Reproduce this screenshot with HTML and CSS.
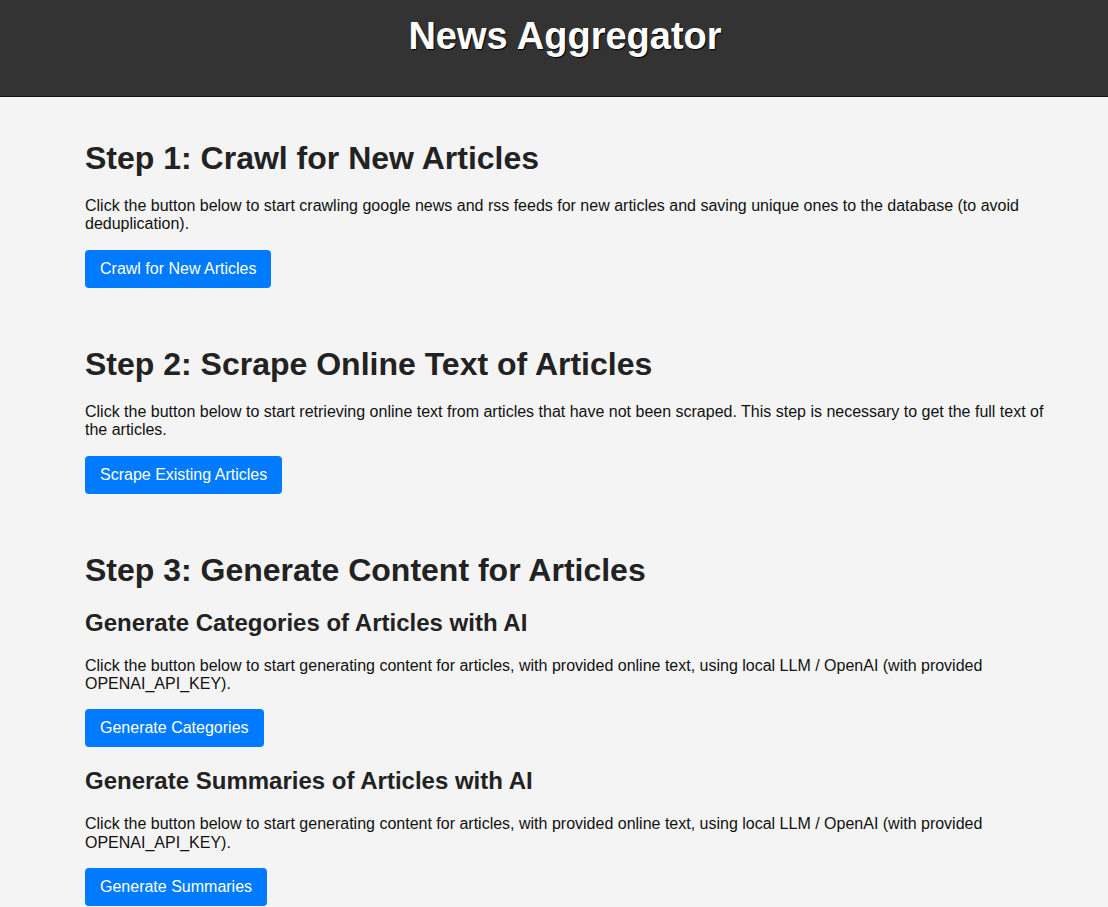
FILE: index.html
```html
<!DOCTYPE html>
<html lang="en">
<head>
<meta charset="utf-8">
<title>News Aggregator</title>
<link rel="stylesheet" href="styles.css">
</head>
<body>
<header class="site-header">
  <h1 class="site-title">News Aggregator</h1>
</header>
<main class="content">
  <section class="step">
    <h2 class="step-title">Step 1: Crawl for New Articles</h2>
    <p class="step-text">Click the button below to start crawling google news and rss feeds for new articles and saving unique ones to the database (to avoid deduplication).</p>
    <div class="actions"><button class="btn">Crawl for New Articles</button></div>
  </section>
  <section class="step">
    <h2 class="step-title">Step 2: Scrape Online Text of Articles</h2>
    <p class="step-text">Click the button below to start retrieving online text from articles that have not been scraped. This step is necessary to get the full text of the articles.</p>
    <div class="actions"><button class="btn">Scrape Existing Articles</button></div>
  </section>
  <section class="step">
    <h2 class="step-title">Step 3: Generate Content for Articles</h2>
    <h3 class="sub-title">Generate Categories of Articles with AI</h3>
    <p class="step-text">Click the button below to start generating content for articles, with provided online text, using local LLM / OpenAI (with provided OPENAI_API_KEY).</p>
    <div class="actions"><button class="btn">Generate Categories</button></div>
    <h3 class="sub-title">Generate Summaries of Articles with AI</h3>
    <p class="step-text">Click the button below to start generating content for articles, with provided online text, using local LLM / OpenAI (with provided OPENAI_API_KEY).</p>
    <div class="actions"><button class="btn">Generate Summaries</button></div>
  </section>
</main>
</body>
</html>
```

FILE: styles.css
```css
html, body {
  margin: 0;
  padding: 0;
}
body {
  background: #f4f4f4;
  font-family: "Liberation Sans", Arial, sans-serif;
  color: #111;
}
.site-header {
  background: #333;
  height: 96px;
  border-bottom: 1px solid #111;
}
.site-title {
  margin: 0;
  padding: 14px 0 0 22px;
  text-align: center;
  color: #fff;
  font-size: 38px;
  font-weight: bold;
  line-height: 44px;
  text-shadow: 1px 1px 1px #000;
}
.content {
  display: flex;
  flex-direction: column;
  gap: 58px;
  padding: 43px 0 40px 85px;
  width: 970px;
}
.step-title {
  margin: 0 0 20px;
  font-size: 32px;
  line-height: 37px;
  font-weight: bold;
  color: #222;
}
.sub-title {
  margin: 20px 0;
  font-size: 24px;
  line-height: 28px;
  font-weight: bold;
  color: #222;
}
.step-text {
  margin: 16px 0;
  font-size: 16px;
  line-height: 18.4px;
  color: #111;
}
.actions {
  margin: 0;
}
.btn {
  display: inline-block;
  background: #007bff;
  color: #fff;
  border: none;
  border-radius: 4px;
  padding: 10px 15px;
  font-family: "Liberation Sans", Arial, sans-serif;
  font-size: 16px;
  line-height: 18px;
  cursor: pointer;
}
```
